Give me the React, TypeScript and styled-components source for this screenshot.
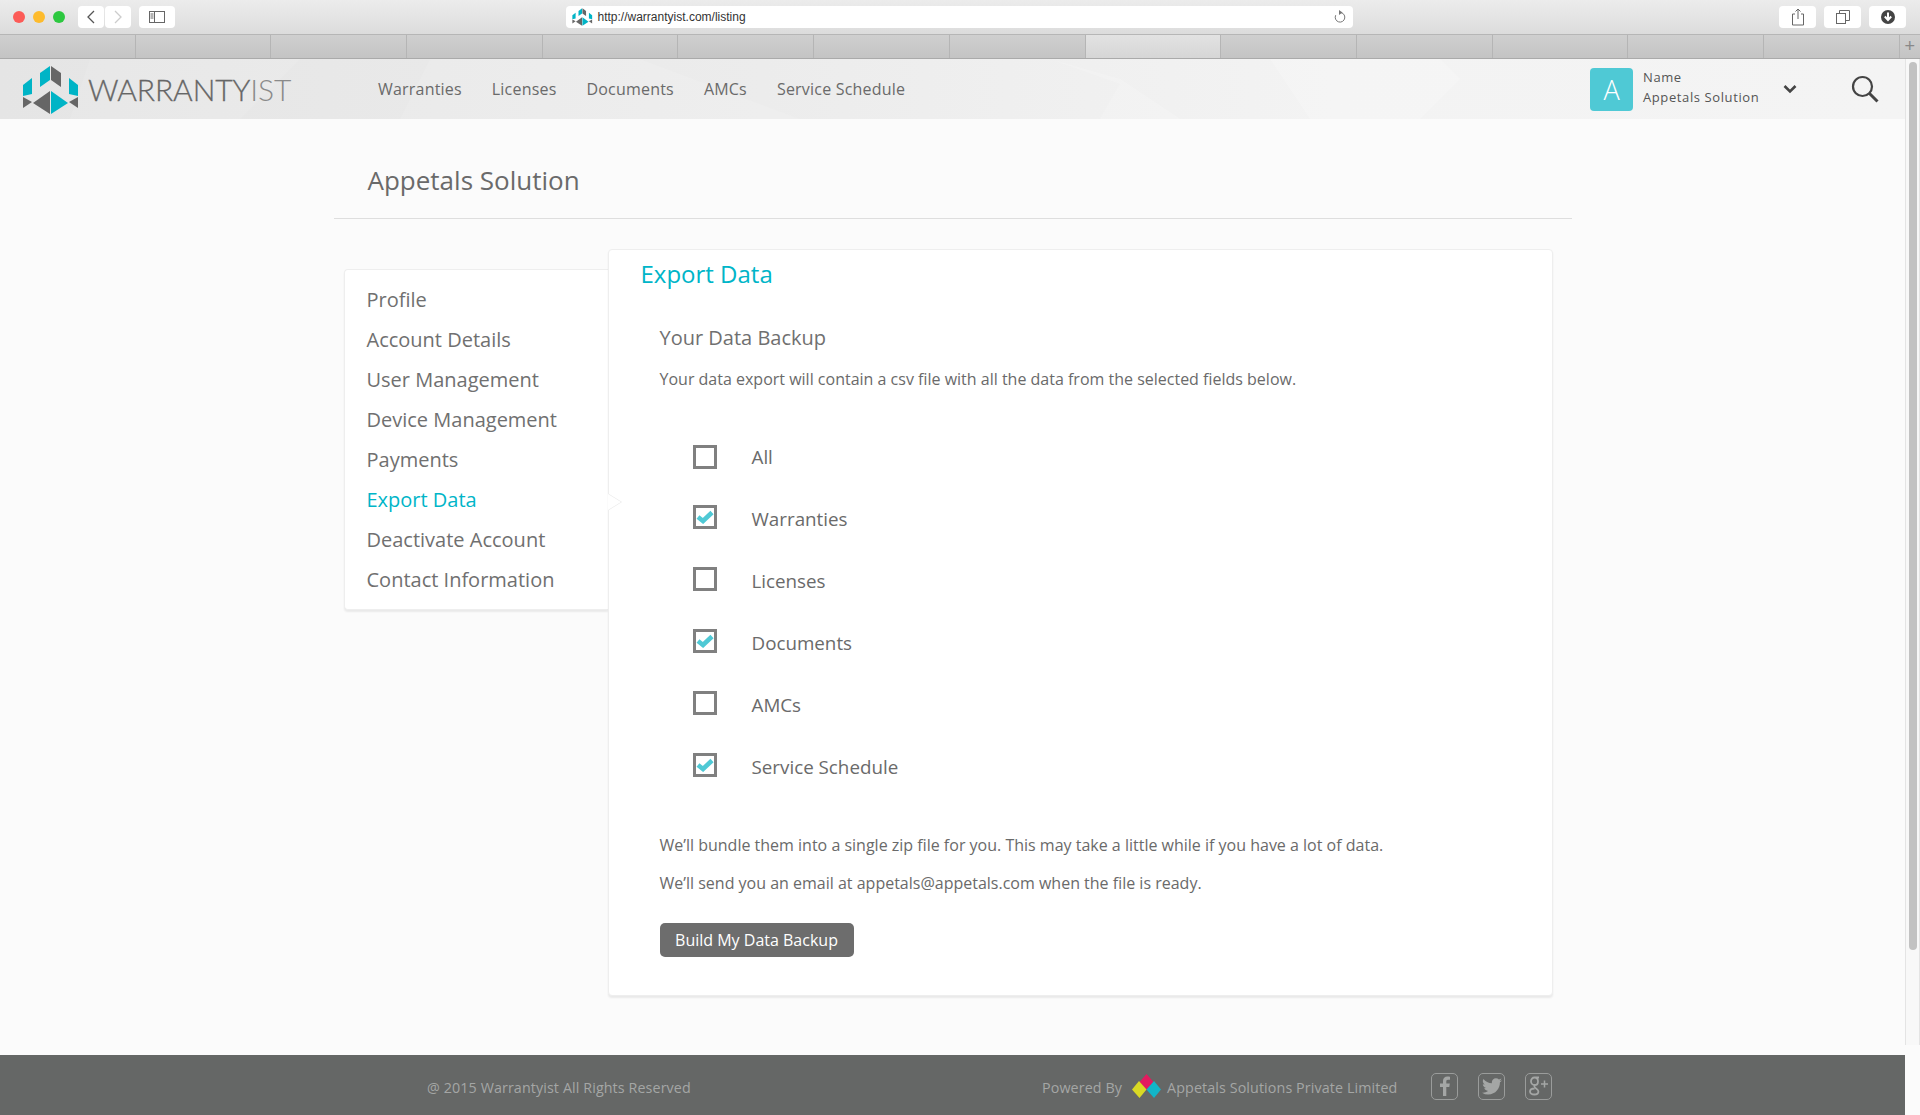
import React from 'react';
import styled, { createGlobalStyle } from 'styled-components';

const Global = createGlobalStyle`
  html, body { margin: 0; padding: 0; height: 100%; overflow: hidden; background: #fbfbfb; }
  body { font-family: "Open Sans", "Noto Sans", sans-serif; color: #666; }
  * { box-sizing: border-box; }
`;

const Screen = styled.div`
  width: 1920px; height: 1115px; display: flex; flex-direction: column; overflow: hidden; position: relative;
`;
const Toolbar = styled.div`
  height: 35px; flex: none; display: flex; align-items: center; padding: 0 13px;
  background: linear-gradient(#ececec, #dcdcdc); border-bottom: 1px solid #b6b6b6;
`;
const Lights = styled.div`display: flex; gap: 8px; margin-right: 13px;`;
const Light = styled.span<{ $c: string }>`
  width: 12px; height: 12px; border-radius: 50%; background: ${p => p.$c};
`;
const ChromeBtn = styled.div<{ $w?: number; $ml?: number }>`
  width: ${p => p.$w ?? 26}px; height: 22px; margin-left: ${p => p.$ml ?? 0}px; background: #fff; border-radius: 4px;
  display: flex; align-items: center; justify-content: center; color: #555; flex: none;
`;
const Address = styled.div`
  width: 787px; height: 22px; margin-left: 391px; background: #fff; border-radius: 4px; flex: none;
  display: flex; align-items: center; padding: 0 6px; gap: 5px;
  font: 12px "Liberation Sans", Arial, sans-serif; color: #333;
`;
const AddressText = styled.span`flex: 1;`;
const TabRow = styled.div`
  height: 24px; flex: none; display: flex; background: linear-gradient(#cfcfcf, #c4c4c4); border-bottom: 1px solid #aaa;
`;
const Tab = styled.div<{ $active?: boolean }>`
  width: 135.7px; flex: none; border-right: 1px solid #b5b5b5;
  background: ${p => (p.$active ? 'linear-gradient(#e2e2e2,#d6d6d6)' : 'transparent')};
`;
const TabPlus = styled.div`
  flex: 1; display: flex; align-items: center; justify-content: center; color: #888; font: 18px "Liberation Sans", sans-serif;
`;
const Viewport = styled.div`flex: 1; display: flex; min-height: 0;`;
const Page = styled.div`flex: 1; display: flex; flex-direction: column; min-width: 0;`;
const Header = styled.header`
  height: 60px; flex: none; position: relative; overflow: hidden;
  display: flex; align-items: center; padding: 0 26px 0 22px;
  background: linear-gradient(90deg, #e5e5e5 0%, #ececec 40%, #f3f3f3 70%, #f4f4f4 100%);
`;
const HeaderArt = styled.svg`position: absolute; inset: 0; width: 100%; height: 100%; pointer-events: none;`;
const Brand = styled.div`display: flex; align-items: center; gap: 9px; width: 356px; flex: none; position: relative;`;
const BrandName = styled.div`
  font: 300 30px/1 Lato, "Liberation Sans", sans-serif; color: #666; letter-spacing: -0.1px; white-space: nowrap;
  -webkit-text-stroke: 0.3px #666;
`;
const BrandThin = styled.span`color: #8a8a8a; -webkit-text-stroke: 0;`;
const Nav = styled.nav`display: flex; gap: 30px; position: relative; font-size: 16px; letter-spacing: 0.2px; color: #6a6a6a;`;
const Account = styled.div`margin-left: auto; display: flex; align-items: center; position: relative;`;
const Avatar = styled.div`
  width: 43px; height: 43px; border-radius: 4px; background: #4fc9d5; color: #fff;
  font-size: 27px; font-weight: 300; display: flex; align-items: center; justify-content: center;
`;
const AccountText = styled.div`
  margin: -4px 0 0 10px; width: 140px; font-size: 13px; letter-spacing: 0.6px; line-height: 20px; color: #555;
`;
const Chevron = styled.div`margin-right: 54px; display: flex;`;
const Container = styled.main`width: 1238px; margin: 0 auto; flex: 1; min-height: 0;`;
const PageTitle = styled.h1`
  height: 100px; margin: 0; padding: 22px 34px 0; display: flex; align-items: center; font-size: 26px; font-weight: 400;
  color: #6a6a6a; border-bottom: 1px solid #dedede;
`;
const Columns = styled.div`display: flex; align-items: flex-start; padding: 30px 0 0 10px;`;
const SideMenu = styled.ul`
  list-style: none; margin: 20px 0 0; padding: 9px 22px 4px; width: 264px; height: 341px; background: #fff;
  border: 1px solid #eee; border-right: 0; border-radius: 4px 0 0 4px; box-shadow: 0 2px 2px rgba(0,0,0,.07);
`;
const SideItem = styled.li<{ $active?: boolean }>`
  height: 40px; display: flex; align-items: center; font-size: 20px; color: ${p => (p.$active ? '#00b5c8' : '#707070')};
`;
const Panel = styled.section`
  position: relative; width: 945px; height: 747px; padding: 8px 32px; background: #fff;
  border: 1px solid #eee; border-radius: 4px; box-shadow: 0 2px 2px rgba(0,0,0,.07);
`;
const Notch = styled.span`
  position: absolute; left: -1px; top: 244px; width: 0; height: 0;
  border-left: 13px solid #fff; border-top: 8px solid transparent; border-bottom: 8px solid transparent;
  filter: drop-shadow(1px 0 0 #e8e8e8);
`;
const PanelTitle = styled.h2`margin: 0; font-size: 24px; line-height: 32px; font-weight: 400; color: #00b5c8;`;
const PanelBody = styled.div`padding: 31px 0 0 19px;`;
const SubTitle = styled.h3`margin: 0; font-size: 20px; line-height: 34px; font-weight: 400; color: #707070;`;
const Para = styled.p`margin: 0; font-size: 16px; line-height: 24px; color: #6a6a6a;`;
const IntroPara = styled(Para)`margin-top: 12px;`;
const Options = styled.div`display: flex; flex-direction: column; margin: 35px 0 35px 33px;`;
const Option = styled.label`height: 62px; display: flex; align-items: center; gap: 35px; font-size: 18.8px; color: #6a6a6a;`;
const Box = styled.span<{ $first: boolean }>`
  width: 24px; height: 24px; border: 3px solid #808080; display: flex; align-items: center; justify-content: center;
  position: relative; top: ${p => (p.$first ? 0 : -2)}px; flex: none;
`;
const LastPara = styled(Para)`margin-top: 14px;`;
const BuildButton = styled.button`
  display: block; margin-top: 28px; width: 194px; height: 34px; border: 0; border-radius: 5px; background: #6d6d6d; color: #fff;
  font: 400 16px "Open Sans", sans-serif; padding: 0;
`;
const Footer = styled.footer`
  height: 60px; flex: none; background: #656766; display: flex; align-items: center; padding: 4px 0 0 427px;
  color: #a4a6a5; font-size: 14.3px; letter-spacing: 0.1px; white-space: nowrap;
`;
const Copy = styled.span`width: 615px; flex: none;`;
const Powered = styled.span`display: flex; align-items: center; width: 389px; flex: none;`;
const PoweredMark = styled.svg`margin: -3px 6px 0 10px; flex: none;`;
const Socials = styled.div`display: flex; gap: 20px; margin-top: -2px;`;
const Social = styled.div`
  width: 27px; height: 27px; border: 1.5px solid #9a9c9b; border-radius: 5px; color: #a4a6a5;
  display: flex; align-items: center; justify-content: center;
`;
const Scrollbar = styled.aside`width: 15px; flex: none; background: #fbfbfb;`;
const Track = styled.div`height: 986px; padding: 3px 2px 0 3px; background: #f8f8f8; border-left: 1px solid #e4e4e4; border-right: 1px solid #e4e4e4;`;
const Thumb = styled.div`height: 888px; border-radius: 5px; background: #c2c2c2;`;

const Logo = ({ s = 1 }: { s?: number }) => (
  <svg width={57 * s} height={49 * s} viewBox="22 64 57 49">
    <polygon fill="#00b4c6" points="40,72 50,65 50,79 40,86" />
    <polygon fill="#666" points="51,65 61,72 61,86 51,79" />
    <polygon fill="#00b4c6" points="23,84 32,77 32,93 23,95" />
    <polygon fill="#666" points="23,96 32,101 23,107" />
    <polygon fill="#666" points="33,102 50,90 50,113" />
    <polygon fill="#00b4c6" points="51,90 68,102 51,113" />
    <polygon fill="#00b4c6" points="69,77 78,84 78,95 69,93" />
    <polygon fill="#666" points="78,96 69,101 78,107" />
  </svg>
);

const Check = () => (
  <svg width="18" height="14" viewBox="0 0 18 14">
    <path d="M2 7 L7 11 L16 2.500" fill="none" stroke="#4fc9d5" strokeWidth="4.600" />
  </svg>
);

const Fb = () => (
  <svg width="12" height="20" viewBox="0 0 12 20"><path fill="#a4a6a5" d="M4 20V11H1V7.500h3V5c0-3 1.800-4.500 4.400-4.500 1.200 0 2.200.1 2.600.2v3.100H9c-1.400 0-1.700.7-1.700 1.700v2h3.500l-.5 3.500H7.300v9z" /></svg>
);
const Tw = () => (
  <svg width="20" height="17" viewBox="0 0 24 20"><path fill="#a4a6a5" d="M24 2.400c-.9.400-1.800.7-2.800.8 1-.6 1.800-1.600 2.200-2.700-1 .6-2 1-3.100 1.200A4.900 4.900 0 0 0 16.700.1c-2.700 0-4.900 2.200-4.900 4.900 0 .4 0 .8.100 1.100C7.800 5.900 4.200 4 1.700.9c-.4.700-.7 1.600-.7 2.500 0 1.700.9 3.200 2.200 4.100-.8 0-1.600-.2-2.200-.6v.1c0 2.400 1.700 4.400 3.900 4.800-.4.100-.8.200-1.300.2-.3 0-.6 0-.9-.1.600 2 2.400 3.400 4.600 3.400A9.900 9.900 0 0 1 0 17.400 13.900 13.900 0 0 0 7.500 19.600c9.100 0 14-7.500 14-14v-.6c1-.7 1.800-1.600 2.500-2.600z" /></svg>
);
const Gp = () => (
  <svg width="22" height="22" viewBox="0 0 22 22">
    <path fill="none" stroke="#a4a6a5" strokeWidth="1.800" d="M11 2.500H6.500C4.500 2.500 3 4.200 3 6.200s1.500 3.800 3.700 3.800c2 0 3.300-1.600 3.300-3.600 0-2.200-1.400-3.900-3.300-3.900M6.500 10.500c-.8 1.400.3 1.900 1.300 2.700 1.400 1 2.600 1.700 2.600 3.300 0 1.900-1.900 3-4 3-2.400 0-4.400-1-4.400-2.900 0-2 2.200-3.100 4.600-3.100" />
    <path stroke="#a4a6a5" strokeWidth="1.500" d="M13 9h7M16.500 5.500v7" />
  </svg>
);

const options = [
  ['All', false], ['Warranties', true], ['Licenses', false],
  ['Documents', true], ['AMCs', false], ['Service Schedule', true],
] as const;
const menu = ['Profile', 'Account Details', 'User Management', 'Device Management', 'Payments', 'Export Data', 'Deactivate Account', 'Contact Information'];

export default function App() {
  return (
    <Screen>
      <Global />
      <Toolbar>
        <Lights><Light $c="#fc5b57" /><Light $c="#fdbb2d" /><Light $c="#2dc840" /></Lights>
        <ChromeBtn>
          <svg width="10" height="16" viewBox="0 0 10 16"><path d="M8 2 2 8l6 6" fill="none" stroke="#555" strokeWidth="1.300" /></svg>
        </ChromeBtn>
        <ChromeBtn $ml={1}>
          <svg width="10" height="16" viewBox="0 0 10 16"><path d="m2 2 6 6-6 6" fill="none" stroke="#ccc" strokeWidth="1.300" /></svg>
        </ChromeBtn>
        <ChromeBtn $w={36} $ml={8}>
          <svg width="16" height="12" viewBox="0 0 16 12"><rect x=".5" y=".5" width="15" height="11" fill="none" stroke="#666" /><path d="M5.500 0v12M1.500 3h3M1.500 5h3M1.500 7h3" stroke="#666" /></svg>
        </ChromeBtn>
        <Address>
          <Logo s={0.36} />
          <AddressText>http://warrantyist.com/listing</AddressText>
          <svg width="14" height="14" viewBox="0 0 14 14"><path d="M7 2.500a4.800 4.800 0 1 1-4.300 2.700" fill="none" stroke="#777" /><path d="M6 0l3.500 2.500L6 5z" fill="#777" /></svg>
        </Address>
        <ChromeBtn $w={37} $ml={426}>
          <svg width="14" height="18" viewBox="0 0 14 18"><path d="M4 6H1.500v11h11V6H10M7 11V1M4.500 3.500 7 1l2.500 2.500" fill="none" stroke="#666" /></svg>
        </ChromeBtn>
        <ChromeBtn $w={37} $ml={8}>
          <svg width="14" height="14" viewBox="0 0 14 14"><rect x=".5" y="3.500" width="9" height="10" fill="none" stroke="#666" /><path d="M3.500 3.500v-3h10v10h-4" fill="none" stroke="#666" /></svg>
        </ChromeBtn>
        <ChromeBtn $w={37} $ml={8}>
          <svg width="14" height="14" viewBox="0 0 14 14"><circle cx="7" cy="7" r="7" fill="#444" /><path d="M7 2.500v7M3.800 6.500 7 10l3.200-3.500" fill="none" stroke="#fff" strokeWidth="2" /></svg>
        </ChromeBtn>
      </Toolbar>
      <TabRow>
        {Array.from({ length: 14 }, (_, i) => <Tab key={i} $active={i === 8} />)}
        <TabPlus>+</TabPlus>
      </TabRow>
      <Viewport>
        <Page>
          <Header>
            <HeaderArt viewBox="0 0 1905 60" preserveAspectRatio="none">
              <polygon points="90,0 300,0 240,60 70,60" fill="#fff" opacity=".09" />
              <polygon points="430,0 640,0 800,60 400,60" fill="#fff" opacity=".1" />
              <polygon points="1050,0 1120,20 1180,60 1100,60 1120,25" fill="#fff" opacity=".16" />
              <polygon points="1270,0 1440,0 1460,20 1420,60 1310,60" fill="#fff" opacity=".2" />
            </HeaderArt>
            <Brand>
              <Logo />
              <BrandName>WARRANTY<BrandThin>IST</BrandThin></BrandName>
            </Brand>
            <Nav>
              <span>Warranties</span><span>Licenses</span><span>Documents</span><span>AMCs</span><span>Service Schedule</span>
            </Nav>
            <Account>
              <Avatar>A</Avatar>
              <AccountText>Name<br />Appetals Solution</AccountText>
              <Chevron>
                <svg width="14" height="10" viewBox="0 0 14 10"><path d="M1.500 2 7 7.500 12.500 2" fill="none" stroke="#444" strokeWidth="2.600" /></svg>
              </Chevron>
              <svg width="28" height="28" viewBox="0 0 28 28"><circle cx="11.500" cy="11.500" r="9.500" fill="none" stroke="#444" strokeWidth="2.200" /><path d="m18.500 18.500 8 8" stroke="#444" strokeWidth="3" /></svg>
            </Account>
          </Header>
          <Container>
            <PageTitle>Appetals Solution</PageTitle>
            <Columns>
              <SideMenu>
                {menu.map(m => <SideItem key={m} $active={m === 'Export Data'}>{m}</SideItem>)}
              </SideMenu>
              <Panel>
                <Notch />
                <PanelTitle>Export Data</PanelTitle>
                <PanelBody>
                  <SubTitle>Your Data Backup</SubTitle>
                  <IntroPara>Your data export will contain a csv file with all the data from the selected fields below.</IntroPara>
                  <Options>
                    {options.map(([label, on], i) => (
                      <Option key={label}><Box $first={i === 0}>{on && <Check />}</Box>{label}</Option>
                    ))}
                  </Options>
                  <Para>We’ll bundle them into a single zip file for you. This may take a little while if you have a lot of data.</Para>
                  <LastPara>We’ll send you an email at appetals@appetals.com when the file is ready.</LastPara>
                  <BuildButton>Build My Data Backup</BuildButton>
                </PanelBody>
              </Panel>
            </Columns>
          </Container>
          <Footer>
            <Copy>@ 2015 Warrantyist All Rights Reserved</Copy>
            <Powered>
              Powered By
              <PoweredMark width="29" height="24" viewBox="0 0 29 24">
                <polygon points="14.500,0 21.500,8 14.500,16 7.500,8" fill="#e31b5f" />
                <polygon points="7,7 14.500,15.500 7.500,24 0,15.500" fill="#d9d924" />
                <polygon points="22,7 29,15.500 22,24 14.500,15.500" fill="#12b5c8" />
              </PoweredMark>
              Appetals Solutions Private Limited
            </Powered>
            <Socials>
              <Social><Fb /></Social>
              <Social><Tw /></Social>
              <Social><Gp /></Social>
            </Socials>
          </Footer>
        </Page>
        <Scrollbar><Track><Thumb /></Track></Scrollbar>
      </Viewport>
    </Screen>
  );
}
